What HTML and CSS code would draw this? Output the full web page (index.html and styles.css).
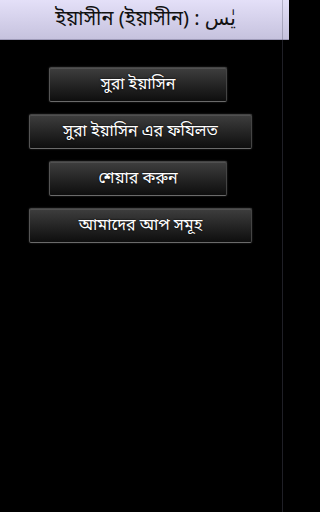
FILE: index.html
```html
<!DOCTYPE html>
<html lang="bn">
<head>
<meta charset="utf-8">
<title>ইয়াসীন</title>
<link rel="stylesheet" href="styles.css">
</head>
<body>
<div class="screen">
  <header class="titlebar">
    <span class="title">ইয়াসীন (ইয়াসীন) : <span class="ar" dir="rtl">يٰس</span></span>
  </header>
  <main class="menu">
    <button class="btn narrow">সুরা ইয়াসিন</button>
    <button class="btn wide">সুরা ইয়াসিন এর ফযিলত</button>
    <button class="btn narrow">শেয়ার করুন</button>
    <button class="btn wide">আমাদের আপ সমূহ</button>
  </main>
  <div class="edge"></div>
</div>
</body>
</html>
```

FILE: styles.css
```css
html, body {
  margin: 0;
  padding: 0;
  background: #000;
}
.screen {
  position: relative;
  width: 289px;
  height: 512px;
  overflow: hidden;
  background: #000;
  font-family: "Noto Sans Bengali", "Noto Sans", "DejaVu Sans", sans-serif;
}
.titlebar {
  height: 40px;
  display: flex;
  align-items: center;
  justify-content: center;
  background: linear-gradient(#e4e0f8, #c6c2de);
  border-bottom: 1px solid #9e9ab8;
  box-sizing: border-box;
}
.title {
  font-size: 20px;
  color: #111;
  margin-left: 2px;
}
.ar {
  font-family: "DejaVu Sans", sans-serif;
  font-size: 20px;
}
.menu {
  display: flex;
  flex-direction: column;
  align-items: flex-start;
  gap: 12px;
  padding-top: 27px;
}
.btn {
  height: 35px;
  box-sizing: border-box;
  border: 1px solid #444;
  border-bottom-color: #6a6a6a;
  border-left-color: #555;
  border-radius: 2px;
  background: linear-gradient(#3e3e3e, #232323 55%, #0e0e0e);
  box-shadow: 0 0 2px rgba(110,110,110,0.45), inset 0 1px 0 rgba(255,255,255,0.1);
  color: #fff;
  font-family: inherit;
  font-size: 16px;
  text-shadow: 0 0 2px #000;
  padding: 0;
  display: flex;
  align-items: center;
  justify-content: center;
}
.narrow {
  width: 178px;
  margin-left: 49px;
}
.wide {
  width: 223px;
  margin-left: 29px;
}
.edge {
  position: absolute;
  top: 0;
  right: 6px;
  width: 1px;
  height: 512px;
  background: rgba(90,90,110,0.35);
}
```
